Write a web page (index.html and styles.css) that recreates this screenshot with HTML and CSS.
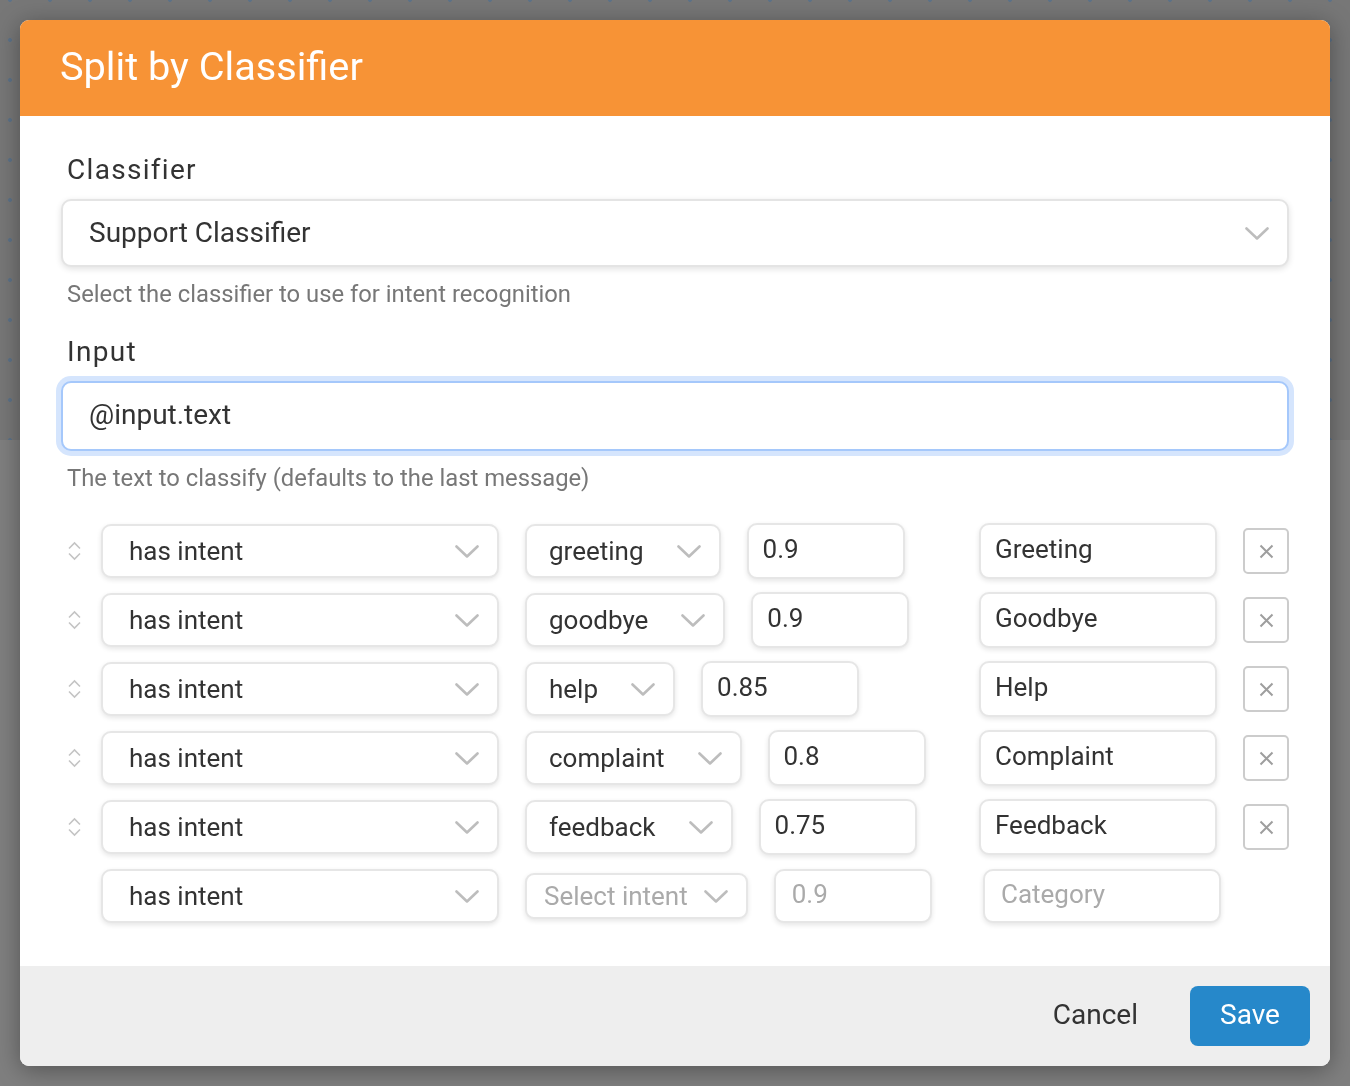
FILE: index.html
```html
<!DOCTYPE html>
<html lang="en">
<head>
<meta charset="utf-8">
<title>Split by Classifier</title>
<link rel="stylesheet" href="styles.css">
</head>
<body>
<div class="page">
  <div class="canvas"></div>
  <div class="below"></div>
</div>
<div class="overlay">
  <div class="modal">
    <div class="modal-header">
      <h1 class="modal-title">Split by Classifier</h1>
    </div>
    <div class="modal-body">
      <div class="field-label">Classifier</div>
      <div class="big-select">
        <span class="big-text">Support Classifier</span>
        <svg class="chev" width="24" height="13" viewBox="0 0 24 13"><polyline points="1.5,1.5 12,11.5 22.5,1.5" fill="none" stroke="#bdbdbd" stroke-width="2.6" stroke-linecap="round" stroke-linejoin="round"/></svg>
      </div>
      <div class="help">Select the classifier to use for intent recognition</div>

      <div class="field-label second">Input</div>
      <div class="big-input"><span class="big-text">@input.text</span></div>
      <div class="help">The text to classify (defaults to the last message)</div>

      <div class="rules">
        <div class="rule">
          <div class="handle"><svg width="15" height="20" viewBox="0 0 15 20"><polyline points="2,7.5 7.5,2 13,7.5" fill="none" stroke="#c4c4c4" stroke-width="1.6"/><polyline points="2,12.5 7.5,18 13,12.5" fill="none" stroke="#c4c4c4" stroke-width="1.6"/></svg></div>
          <div class="cond-select"><span>has intent</span><svg class="chev" width="24" height="13" viewBox="0 0 24 13"><polyline points="1.5,1.5 12,11.5 22.5,1.5" fill="none" stroke="#bdbdbd" stroke-width="2.6" stroke-linecap="round" stroke-linejoin="round"/></svg></div>
          <div class="intent-select"><span>greeting</span><svg class="chev" width="24" height="13" viewBox="0 0 24 13"><polyline points="1.5,1.5 12,11.5 22.5,1.5" fill="none" stroke="#bdbdbd" stroke-width="2.6" stroke-linecap="round" stroke-linejoin="round"/></svg></div>
          <div class="threshold">0.9</div>
          <div class="spacer"></div>
          <div class="category">Greeting</div>
          <div class="delete"><svg width="15" height="15" viewBox="0 0 15 15"><path d="M1.5 1.5 L13.5 13.5 M13.5 1.5 L1.5 13.5" stroke="#9e9e9e" stroke-width="2" fill="none"/></svg></div>
        </div>
        <div class="rule">
          <div class="handle"><svg width="15" height="20" viewBox="0 0 15 20"><polyline points="2,7.5 7.5,2 13,7.5" fill="none" stroke="#c4c4c4" stroke-width="1.6"/><polyline points="2,12.5 7.5,18 13,12.5" fill="none" stroke="#c4c4c4" stroke-width="1.6"/></svg></div>
          <div class="cond-select"><span>has intent</span><svg class="chev" width="24" height="13" viewBox="0 0 24 13"><polyline points="1.5,1.5 12,11.5 22.5,1.5" fill="none" stroke="#bdbdbd" stroke-width="2.6" stroke-linecap="round" stroke-linejoin="round"/></svg></div>
          <div class="intent-select"><span>goodbye</span><svg class="chev" width="24" height="13" viewBox="0 0 24 13"><polyline points="1.5,1.5 12,11.5 22.5,1.5" fill="none" stroke="#bdbdbd" stroke-width="2.6" stroke-linecap="round" stroke-linejoin="round"/></svg></div>
          <div class="threshold">0.9</div>
          <div class="spacer"></div>
          <div class="category">Goodbye</div>
          <div class="delete"><svg width="15" height="15" viewBox="0 0 15 15"><path d="M1.5 1.5 L13.5 13.5 M13.5 1.5 L1.5 13.5" stroke="#9e9e9e" stroke-width="2" fill="none"/></svg></div>
        </div>
        <div class="rule">
          <div class="handle"><svg width="15" height="20" viewBox="0 0 15 20"><polyline points="2,7.5 7.5,2 13,7.5" fill="none" stroke="#c4c4c4" stroke-width="1.6"/><polyline points="2,12.5 7.5,18 13,12.5" fill="none" stroke="#c4c4c4" stroke-width="1.6"/></svg></div>
          <div class="cond-select"><span>has intent</span><svg class="chev" width="24" height="13" viewBox="0 0 24 13"><polyline points="1.5,1.5 12,11.5 22.5,1.5" fill="none" stroke="#bdbdbd" stroke-width="2.6" stroke-linecap="round" stroke-linejoin="round"/></svg></div>
          <div class="intent-select"><span>help</span><svg class="chev" width="24" height="13" viewBox="0 0 24 13"><polyline points="1.5,1.5 12,11.5 22.5,1.5" fill="none" stroke="#bdbdbd" stroke-width="2.6" stroke-linecap="round" stroke-linejoin="round"/></svg></div>
          <div class="threshold">0.85</div>
          <div class="spacer"></div>
          <div class="category">Help</div>
          <div class="delete"><svg width="15" height="15" viewBox="0 0 15 15"><path d="M1.5 1.5 L13.5 13.5 M13.5 1.5 L1.5 13.5" stroke="#9e9e9e" stroke-width="2" fill="none"/></svg></div>
        </div>
        <div class="rule">
          <div class="handle"><svg width="15" height="20" viewBox="0 0 15 20"><polyline points="2,7.5 7.5,2 13,7.5" fill="none" stroke="#c4c4c4" stroke-width="1.6"/><polyline points="2,12.5 7.5,18 13,12.5" fill="none" stroke="#c4c4c4" stroke-width="1.6"/></svg></div>
          <div class="cond-select"><span>has intent</span><svg class="chev" width="24" height="13" viewBox="0 0 24 13"><polyline points="1.5,1.5 12,11.5 22.5,1.5" fill="none" stroke="#bdbdbd" stroke-width="2.6" stroke-linecap="round" stroke-linejoin="round"/></svg></div>
          <div class="intent-select"><span>complaint</span><svg class="chev" width="24" height="13" viewBox="0 0 24 13"><polyline points="1.5,1.5 12,11.5 22.5,1.5" fill="none" stroke="#bdbdbd" stroke-width="2.6" stroke-linecap="round" stroke-linejoin="round"/></svg></div>
          <div class="threshold">0.8</div>
          <div class="spacer"></div>
          <div class="category">Complaint</div>
          <div class="delete"><svg width="15" height="15" viewBox="0 0 15 15"><path d="M1.5 1.5 L13.5 13.5 M13.5 1.5 L1.5 13.5" stroke="#9e9e9e" stroke-width="2" fill="none"/></svg></div>
        </div>
        <div class="rule">
          <div class="handle"><svg width="15" height="20" viewBox="0 0 15 20"><polyline points="2,7.5 7.5,2 13,7.5" fill="none" stroke="#c4c4c4" stroke-width="1.6"/><polyline points="2,12.5 7.5,18 13,12.5" fill="none" stroke="#c4c4c4" stroke-width="1.6"/></svg></div>
          <div class="cond-select"><span>has intent</span><svg class="chev" width="24" height="13" viewBox="0 0 24 13"><polyline points="1.5,1.5 12,11.5 22.5,1.5" fill="none" stroke="#bdbdbd" stroke-width="2.6" stroke-linecap="round" stroke-linejoin="round"/></svg></div>
          <div class="intent-select"><span>feedback</span><svg class="chev" width="24" height="13" viewBox="0 0 24 13"><polyline points="1.5,1.5 12,11.5 22.5,1.5" fill="none" stroke="#bdbdbd" stroke-width="2.6" stroke-linecap="round" stroke-linejoin="round"/></svg></div>
          <div class="threshold">0.75</div>
          <div class="spacer"></div>
          <div class="category">Feedback</div>
          <div class="delete"><svg width="15" height="15" viewBox="0 0 15 15"><path d="M1.5 1.5 L13.5 13.5 M13.5 1.5 L1.5 13.5" stroke="#9e9e9e" stroke-width="2" fill="none"/></svg></div>
        </div>
        <div class="rule new-rule">
          <div class="handle"></div>
          <div class="cond-select"><span>has intent</span><svg class="chev" width="24" height="13" viewBox="0 0 24 13"><polyline points="1.5,1.5 12,11.5 22.5,1.5" fill="none" stroke="#bdbdbd" stroke-width="2.6" stroke-linecap="round" stroke-linejoin="round"/></svg></div>
          <div class="intent-select placeholder-select"><span>Select intent</span><svg class="chev" width="24" height="13" viewBox="0 0 24 13"><polyline points="1.5,1.5 12,11.5 22.5,1.5" fill="none" stroke="#bdbdbd" stroke-width="2.6" stroke-linecap="round" stroke-linejoin="round"/></svg></div>
          <div class="threshold placeholder">0.9</div>
          <div class="spacer"></div>
          <div class="category placeholder">Category</div>
          <div class="delete-space"></div>
        </div>
      </div>
    </div>
    <div class="modal-footer">
      <button class="btn btn-cancel">Cancel</button>
      <button class="btn btn-save">Save</button>
    </div>
  </div>
</div>
</body>
</html>
```

FILE: styles.css
```css
* { box-sizing: border-box; }
html, body { margin: 0; padding: 0; }
body {
  font-family: Roboto, "Liberation Sans", sans-serif;
  background: #7f7f7f;
  width: 1350px;
  height: 1086px;
  overflow: hidden;
}
.page { width: 100%; height: 100%; }
.canvas {
  height: 440px;
  background-color: #777777;
  background-image: radial-gradient(circle, #5d7288 1.6px, rgba(93,114,136,0) 2.3px);
  background-size: 40px 40px;
  background-position: -10px -20px;
}
.below { height: 646px; background: #7f7f7f; }

.overlay {
  position: fixed;
  inset: 0;
  padding: 20px;
}
.modal {
  width: 1310px;
  height: 1046px;
  background: #fff;
  border-radius: 9px;
  overflow: hidden;
  display: flex;
  flex-direction: column;
  box-shadow: 0 4px 24px rgba(0,0,0,0.35);
}
.modal-header {
  height: 96px;
  background: #f79336;
  display: flex;
  align-items: center;
  padding-left: 40px;
  flex-shrink: 0;
}
.modal-title {
  margin: 0;
  font-weight: 400;
  font-size: 39.7px;
  color: #fff;
  line-height: 48px;
  padding-bottom: 2px;
}
.modal-body {
  flex: 1;
  padding: 36px 41px 0 41px;
}
.field-label {
  font-size: 28px;
  line-height: 36px;
  letter-spacing: 1.3px;
  color: #333;
  padding-left: 6px;
  margin-bottom: 11px;
}
.field-label.second { margin-top: 26px; }
.big-select, .big-input {
  height: 68px;
  border: 2px solid #e4e4e4;
  border-radius: 10px;
  background: #fff;
  display: flex;
  align-items: center;
  padding: 0 18px 2px 26px;
  box-shadow: 0 2px 6px rgba(0,0,0,0.12);
}
.big-select { justify-content: space-between; }
.big-select .chev { margin-top: 2px; }
.big-input {
  height: 70px;
  border-color: #a5c8fb;
  box-shadow: 0 0 0 5px #d5e5fd;
  padding-bottom: 4px;
}
.big-text {
  font-size: 28px;
  color: #333;
}
.help {
  margin-top: 13px;
  font-size: 23.8px;
  line-height: 28px;
  color: #777;
  padding-left: 6px;
}

.rules {
  margin-top: 31px;
  display: flex;
  flex-direction: column;
  gap: 13px;
}
.rule {
  height: 56px;
  display: flex;
  align-items: center;
}
.handle {
  width: 40px;
  height: 20px;
  padding-left: 6px;
  display: flex;
  align-items: center;
}
.cond-select, .intent-select, .threshold, .category {
  background: #fff;
  border: 2px solid #e6e6e6;
  border-radius: 10px;
  box-shadow: 0 2px 5px rgba(0,0,0,0.1);
  font-size: 26px;
  color: #333;
  display: flex;
  align-items: center;
}
.cond-select {
  width: 398px;
  height: 54px;
  padding: 0 18px 0 26px;
  justify-content: space-between;
}
.intent-select {
  height: 54px;
  margin-left: 26px;
  padding: 0 18px 0 22px;
}
.intent-select .chev { margin-left: 33px; }
.placeholder-select {
  height: 46px;
  padding: 0 18px 0 17px;
  color: #aaa;
  border-radius: 9px;
}
.placeholder-select .chev { margin-left: 16px; }
.threshold {
  width: 158px;
  height: 56px;
  margin-left: 26px;
  padding: 0 14px 4px;
}
.category {
  width: 238px;
  height: 56px;
  padding: 0 14px 4px;
}
.placeholder { color: #aaa; }
.new-rule .threshold { padding-left: 16px; height: 54px; }
.new-rule .category { padding-left: 16px; height: 54px; }
.spacer { flex: 1; }
.delete {
  width: 46px;
  height: 46px;
  margin-left: 26px;
  border: 2px solid #cccccc;
  border-radius: 5px;
  display: flex;
  align-items: center;
  justify-content: center;
}
.delete-space { width: 42px; margin-left: 26px; }

.modal-footer {
  height: 100px;
  background: #eeeeee;
  display: flex;
  align-items: center;
  justify-content: flex-end;
  padding: 0 20px;
  gap: 22px;
  flex-shrink: 0;
}
.btn {
  font-family: Roboto, "Liberation Sans", sans-serif;
  font-size: 28px;
  border: none;
  height: 60px;
  padding: 0 30px 4px;
  border-radius: 8px;
  background: transparent;
  color: #333;
}
.btn-save {
  width: 120px;
  padding: 0 0 4px;
  background: #2688ca;
  color: #fff;
}
```
